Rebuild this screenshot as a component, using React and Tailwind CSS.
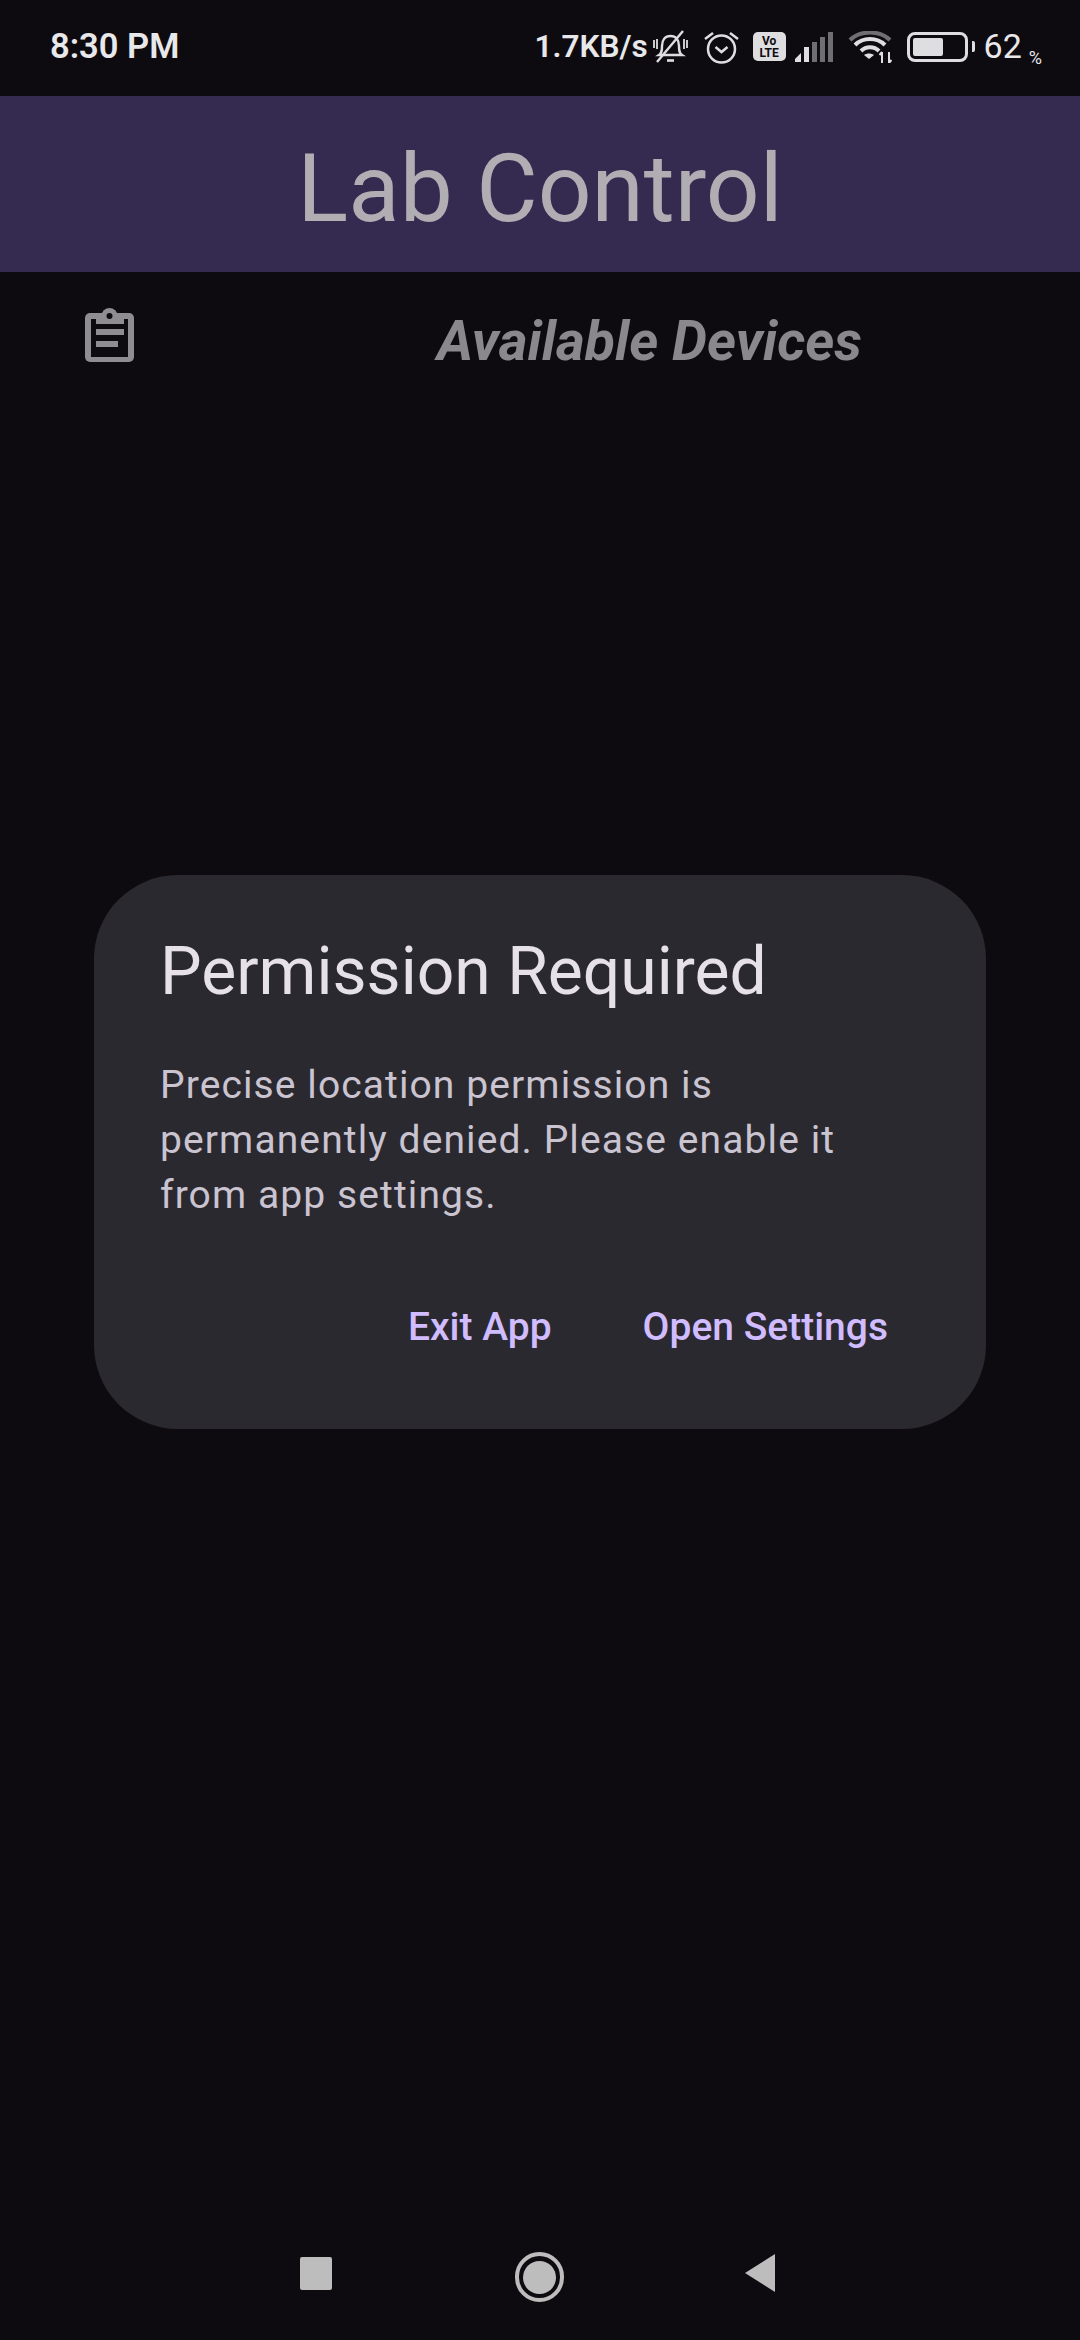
import React from "react";

const MutedBell = () => (
  <svg width="35" height="34" viewBox="0 0 35 34" fill="none" stroke="#dedde0" strokeWidth="2.4">
    <path d="M6 25c3-2 3-5 3-9 0-6 3-10 8.500-10s8.500 4 8.500 10c0 4 0 7 3 9z" />
    <path d="M14 30.500h7" strokeWidth="2.600" />
    <path d="M4 32 30 1" />
    <path d="M1 10v8M4 9v10M31 9v10M34 10v8" strokeWidth="1.800" />
  </svg>
);

const Alarm = () => (
  <svg width="35" height="34" viewBox="0 0 35 34" fill="none" stroke="#dedde0" strokeWidth="2.500">
    <circle cx="17.500" cy="19" r="13.500" />
    <path d="M11.500 17l6 5 6-5" />
    <path d="M1 9l8-6M34 9l-8-6" />
  </svg>
);

const Volte = () => (
  <div className="flex h-[29px] w-[33px] flex-col items-center justify-center rounded-[5px] bg-[#dedde0] text-[12px] leading-[12px] font-bold text-[#0e0b10]">
    <span>Vo</span>
    <span>LTE</span>
  </div>
);

const Signal = () => (
  <svg width="38" height="30" viewBox="0 0 38 30">
    <path d="M0 30v-3l6-6v9z" fill="#dedde0" />
    <rect x="9" y="15" width="5" height="15" fill="#dedde0" />
    <rect x="17" y="10" width="5" height="20" fill="#6f6e72" />
    <rect x="25" y="5" width="5" height="25" fill="#6f6e72" />
    <rect x="33" y="0" width="5" height="30" fill="#6f6e72" />
  </svg>
);

const Wifi = () => (
  <svg width="44" height="32" viewBox="0 0 44 32" fill="none">
    <path d="M2 9C12-1 32-1 42 9" stroke="#6f6e72" strokeWidth="4" />
    <path d="M7 14C15 6 29 6 37 14" stroke="#dedde0" strokeWidth="4" />
    <path d="M13 20C18 15 26 15 31 20" stroke="#dedde0" strokeWidth="4" />
    <path d="M21 28l-5-4c3-2 7-2 10 0z" fill="#dedde0" />
    <path d="M34 21v11M31.500 24l2.500-3M41 21v11M41 32l2.500-3" stroke="#dedde0" strokeWidth="2" />
  </svg>
);

const Battery = () => (
  <div className="flex items-center gap-[4px]">
    <div className="flex h-[30px] w-[61px] items-center rounded-[8px] border-[3px] border-[#dedde0] p-[3px]">
      <div className="h-full w-[62%] rounded-[2px] bg-[#dedde0]" />
    </div>
    <div className="h-[11px] w-[3px] rounded-r-[2px] bg-[#dedde0]" />
  </div>
);

const StatusBar = () => (
  <div className="flex h-[96px] items-center justify-between pr-[38px] pb-[3px] pl-[50px] font-semibold text-[#e8e7ea]">
    <span className="text-[34.500px]">8:30 PM</span>
    <div className="flex items-center">
      <span className="text-[31.500px]">1.7KB/s</span>
      <div className="ml-[5px] flex items-center gap-[16px]">
        <MutedBell />
        <Alarm />
      </div>
      <div className="ml-[14px]">
        <Volte />
      </div>
      <div className="ml-[9px] flex items-center gap-[15px]">
        <Signal />
        <Wifi />
      </div>
      <div className="ml-[15px]">
        <Battery />
      </div>
      <span className="ml-[9px] text-[34px] font-normal">62</span>
      <span className="ml-[7px] self-end pb-[1px] text-[18px] font-normal">%</span>
    </div>
  </div>
);

const ClipboardIcon = () => (
  <svg className="mb-[10px]" width="49" height="54" viewBox="0 0 49 54">
    <rect x="0" y="5" width="49" height="49" rx="5" fill="#8f8d91" />
    <circle cx="24.500" cy="8" r="8" fill="#8f8d91" />
    <rect x="6" y="11" width="37" height="38" fill="#0e0b10" />
    <rect x="11" y="5" width="28" height="11" fill="#8f8d91" />
    <circle cx="24.500" cy="8" r="3" fill="#0e0b10" />
    <rect x="11" y="21" width="28" height="6" fill="#8f8d91" />
    <rect x="11" y="33" width="22" height="6" fill="#8f8d91" />
  </svg>
);

const NavBar = () => (
  <div className="flex h-[110px] items-center pb-[24px] pl-[300px]">
    <div className="h-[33px] w-[32px] rounded-[2px] bg-[#bdbdbd]" />
    <div className="mt-[8px] ml-[183px] flex h-[50px] w-[49px] items-center justify-center rounded-full border-[4px] border-[#bdbdbd]">
      <div className="h-[33px] w-[33px] rounded-full bg-[#bdbdbd]" />
    </div>
    <svg className="ml-[181px]" width="30" height="38" viewBox="0 0 30 38">
      <path d="M30 0v38L0 19z" fill="#bdbdbd" />
    </svg>
  </div>
);

export default function App() {
  return (
    <div className="flex h-[2340px] w-[1080px] flex-col overflow-hidden bg-[#0e0b10] font-['Roboto',sans-serif]">
      <StatusBar />
      <header className="flex h-[176px] items-center justify-center bg-[#352a50] pt-[10px]">
        <h1 className="text-[94.500px] text-[#b0adb3]">Lab Control</h1>
      </header>
      <div className="flex h-[136px] items-center pl-[85px]">
        <ClipboardIcon />
        <h2 className="ml-[303px] pt-[3px] text-[55.500px] font-bold text-[#8a888c] italic">Available Devices</h2>
      </div>

      <div className="flex flex-1 items-start justify-center pt-[467px]">
        <div className="flex h-[554px] w-[892px] flex-col rounded-[84px] bg-[#2b2930] pt-[59px] pr-[98px] pl-[66px]">
          <h3 className="text-[66px] leading-[76px] text-[#e6e0e9]">Permission Required</h3>
          <p className="mt-[48px] text-[39px] leading-[55px] tracking-[1.100px] text-[#cac4d0]">
            Precise location permission is permanently denied. Please enable it from app settings.
          </p>
          <div className="mt-[82px] flex justify-end gap-[91px] text-[39px] leading-[44px] font-medium text-[#d0bcff]">
            <span>Exit App</span>
            <span>Open Settings</span>
          </div>
        </div>
      </div>

      <NavBar />
    </div>
  );
}
